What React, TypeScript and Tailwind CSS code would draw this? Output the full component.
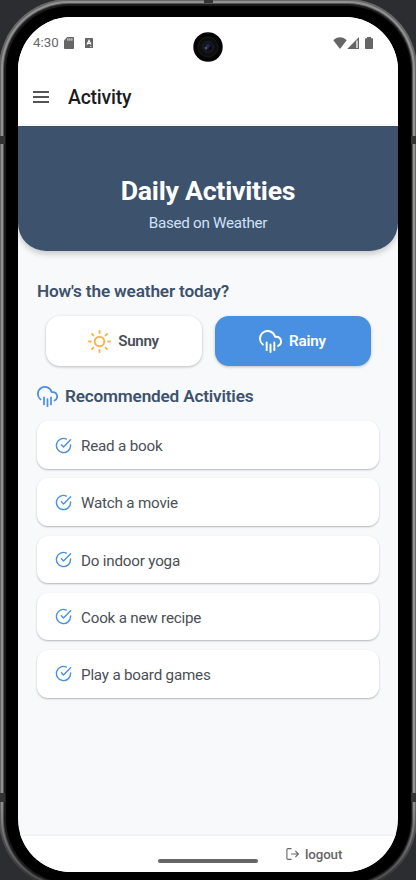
import React from "react";

const ACTIVITIES = [
  "Read a book",
  "Watch a movie",
  "Do indoor yoga",
  "Cook a new recipe",
  "Play a board games",
];

type IconProps = { className?: string };

const stroke = {
  viewBox: "0 0 24 24",
  fill: "none",
  stroke: "currentColor",
  strokeWidth: 2,
  strokeLinecap: "round" as const,
  strokeLinejoin: "round" as const,
};

function CloudRain({ className }: IconProps) {
  return (
    <svg {...stroke} className={className}>
      <path d="M16 13v8M8 13v8M12 15v8" />
      <path d="M20 16.58A5 5 0 0 0 18 7h-1.26A8 8 0 1 0 4 15.25" />
    </svg>
  );
}

function Sun({ className }: IconProps) {
  return (
    <svg {...stroke} className={className}>
      <circle cx="12" cy="12" r="5" />
      <path d="M12 1v2M12 21v2M4.22 4.22l1.42 1.42M18.36 18.36l1.42 1.42M1 12h2M21 12h2M4.22 19.78l1.42-1.42M18.36 5.64l1.42-1.42" />
    </svg>
  );
}

function CheckCircle({ className }: IconProps) {
  return (
    <svg {...stroke} className={className}>
      <path d="M22 11.08V12a10 10 0 1 1-5.93-9.14" />
      <path d="M22 4 12 14.01l-3-3" />
    </svg>
  );
}

function StatusBar() {
  return (
    <div className="flex h-[50px] items-center pt-px pr-[25px] pl-[15px] text-[#666]">
      <span className="w-[31px] text-[13.3px] leading-4">4:30</span>
      <svg viewBox="0 0 10 12" className="h-[12px] w-[10px]" fill="currentColor">
        <path d="M3.2 0H9a1 1 0 0 1 1 1v10a1 1 0 0 1-1 1H1a1 1 0 0 1-1-1V3.6Z" />
        <path d="M3.9 1.3v2.4M5.9 1.3v2.4M7.9 1.3v2.4" stroke="#fff" strokeWidth=".9" />
      </svg>
      <svg viewBox="0 0 8 10" className="ml-[11px] h-[10px] w-[8px]">
        <rect width="8" height="10" rx=".6" fill="currentColor" />
        <path d="M2 6.6 4 2.4l2 4.2M2.8 5.4h2.4" fill="none" stroke="#fff" strokeWidth="1.2" />
        <path d="M5 8.5h1.5" stroke="#fff" strokeWidth=".7" />
      </svg>
      <div className="ml-auto flex items-center">
        <svg viewBox="0 0 14 12" className="h-[12px] w-[14px]" fill="currentColor">
          <path d="M.3 3.2C4-.7 10-.7 13.7 3.2L7 12Z" />
        </svg>
        <svg viewBox="0 0 12 12" className="h-[12px] w-[12px]">
          <path d="M.2 12 12 0v12Z" fill="currentColor" />
          <path d="M10 3.4v7.6" stroke="#fff" strokeWidth="1.3" />
        </svg>
        <svg viewBox="0 0 8 12" className="ml-[6px] h-[12px] w-[8px]" fill="currentColor">
          <path d="M2 0h4v1.2h1.2a.8.8 0 0 1 .8.8v9.2a.8.8 0 0 1-.8.8H.8a.8.8 0 0 1-.8-.8V2a.8.8 0 0 1 .8-.8H2Z" />
        </svg>
      </div>
    </div>
  );
}

function Screen() {
  return (
    <div className="flex h-[855px] w-[380px] flex-col overflow-hidden rounded-[53px] bg-[#f8f9fb]">
      <div className="h-[109px] shrink-0 bg-white">
        <StatusBar />
        <div className="flex h-[60px] items-center pl-[15px]">
          <svg viewBox="0 0 16 12" className="h-[12px] w-[16px]">
            <path d="M0 1h16M0 6h16M0 11h16" stroke="#1c1c1e" strokeWidth="1.7" />
          </svg>
          <h1 className="ml-[19px] pt-px text-[19.4px] leading-6 font-medium tracking-[-0.2px] text-[#1c1c1e]">Activity</h1>
        </div>
      </div>

      <header className="flex h-[125px] shrink-0 flex-col items-center rounded-b-[28px] bg-[#3d526c] pt-[48px] shadow-[0_3px_6px_rgba(0,0,0,0.2)]">
        <h2 className="text-[26.7px] leading-[34px] font-bold tracking-[-0.25px] text-white">Daily Activities</h2>
        <p className="mt-[6px] text-[15.2px] leading-[18px] tracking-[-0.28px] text-[#d0e1f9]">Based on Weather</p>
      </header>

      <main className="flex flex-1 flex-col px-[19px] pt-[29px]">
        <h3 className="text-[17.2px] leading-[22px] font-semibold tracking-[-0.16px] text-[#3d526c]">How's the weather today?</h3>
        <div className="mt-[14px] flex justify-center gap-[13px]">
          <button className="flex h-[50px] w-[156px] items-center justify-center rounded-[14px] bg-white text-[#4a4f57] shadow-[0_1px_3px_rgba(0,0,0,0.26)]">
            <Sun className="size-[23px] text-[#ffb347]" />
            <span className="ml-[7px] pt-px text-[15.2px] font-semibold tracking-[-0.35px]">Sunny</span>
          </button>
          <button className="flex h-[50px] w-[156px] items-center justify-center rounded-[14px] bg-[#4a90e2] text-white shadow-[0_1px_3px_rgba(0,0,0,0.24)]">
            <CloudRain className="size-[23px]" />
            <span className="ml-[7px] pt-px text-[15.2px] font-semibold tracking-[-0.15px]">Rainy</span>
          </button>
        </div>

        <div className="mt-[18px] flex h-[24px] items-center">
          <CloudRain className="size-[21px] text-[#4a90e2]" />
          <h3 className="ml-[7px] text-[17.2px] leading-[22px] font-semibold tracking-[-0.19px] text-[#3d526c]">Recommended Activities</h3>
        </div>

        <ul className="mt-[13.3px] flex flex-col gap-[9.7px]">
          {ACTIVITIES.map((name) => (
            <li
              key={name}
              className="flex h-[47.5px] items-center rounded-[11px] bg-white pl-[18px] shadow-[0_1px_2px_rgba(0,0,0,0.28)]"
            >
              <CheckCircle className="size-[17px] text-[#4a90e2]" />
              <span className="ml-[9px] pt-[3px] text-[15.2px] tracking-[-0.2px] text-[#4a4f57]">{name}</span>
            </li>
          ))}
        </ul>
      </main>

      <footer className="relative flex h-[38px] shrink-0 items-center border-t-2 border-[#f2f3f5] bg-white pl-[268px] text-[#666]">
        <svg viewBox="0 0 14 12" className="h-[12px] w-[14px]" fill="none" stroke="currentColor" strokeWidth="1.1">
          <path d="M5.5 .6H2A1.1 1.1 0 0 0 .9 1.7v8.6A1.1 1.1 0 0 0 2 11.4h3.5M5 6H12.4M9.4 3l3 3-3 3" />
        </svg>
        <span className="ml-[5px] pt-px text-[13.3px] font-medium tracking-[-0.1px]">logout</span>
        <div className="absolute top-[23px] left-[140px] h-[4px] w-[100px] rounded-full bg-[#666]" />
      </footer>
    </div>
  );
}

export default function App() {
  return (
    <div className="relative h-[880px] w-[416px] overflow-hidden bg-[#2c2d31] font-[Roboto,sans-serif]">
      <div className="-mt-px -ml-px h-[890px] w-[418px] rounded-[70px] bg-linear-to-b from-[#686868] from-90% to-[#303030] p-[2px]">
        <div className="h-full w-full rounded-[68px] bg-linear-to-b from-[#929292] from-90% to-[#484848] p-[2px]">
          <div className="h-full w-full rounded-[66px] bg-linear-to-b from-[#555] from-90% to-[#2a2a2a] p-[1px]">
            <div className="h-full w-full rounded-[65px] bg-[#1b1b1b] p-[1.5px]">
              <div className="h-full w-full rounded-[64px] bg-black pt-[11.5px] pl-[12.5px]">
                <Screen />
              </div>
            </div>
          </div>
        </div>
      </div>
      <div className="absolute top-[136px] left-0 h-2 w-[5px] bg-[#333]" />
      <div className="absolute top-[136px] right-0 h-2 w-[5px] bg-[#333]" />
      <div className="absolute top-[793px] left-0 h-[9px] w-[5px] bg-[#333]" />
      <div className="absolute top-[793px] right-0 h-[9px] w-[5px] bg-[#333]" />
      <div className="absolute top-0 left-[204px] h-[3px] w-[9px] bg-[#333]" />
      <svg viewBox="0 0 30 30" className="absolute top-[32px] left-[193px] size-[30px]">
        <circle cx="15" cy="15" r="14.7" fill="#050505" />
        <circle cx="15" cy="15" r="10" fill="#0e0e0e" stroke="#191919" />
        <circle cx="15" cy="15" r="5.5" fill="#10121c" stroke="#25252c" strokeWidth=".8" />
        <circle cx="15" cy="14" r="2.2" fill="#24245a" />
        <circle cx="13" cy="16" r="1.5" fill="#4a5266" />
        <circle cx="17" cy="16" r="1.2" fill="#03030d" />
      </svg>
    </div>
  );
}
